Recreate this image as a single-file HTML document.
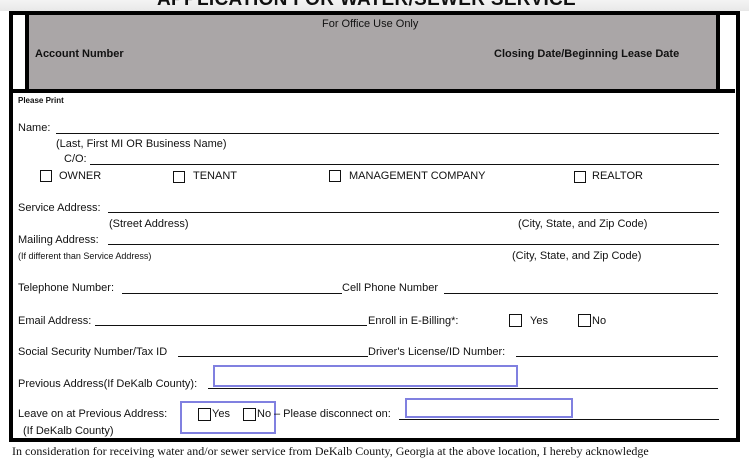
<!DOCTYPE html>
<html><head><meta charset="utf-8"><style>
body{margin:0;width:749px;height:449px;overflow:hidden;background:#fff;position:relative;font-family:"Liberation Sans",sans-serif;font-size:11px;color:#111}
.a{position:absolute;white-space:nowrap}
.l{position:absolute;height:1px;background:#111}
.cb{position:absolute;width:12px;height:12px;border:1px solid #111;box-sizing:border-box}
.bl{position:absolute;border:2px solid #8080e0;box-sizing:border-box}
</style></head><body>
<div class="a" style="left:0;top:0;width:749px;height:11px;background:linear-gradient(#f4f4f4,#e8e8e8)"></div>
<div class="a" style="left:157px;top:-11px;font-size:19px;font-weight:bold;letter-spacing:0.3px">APPLICATION FOR WATER/SEWER SERVICE</div>
<div class="a" style="left:9px;top:11px;width:731px;height:431px;border:4px solid #000;box-sizing:border-box"></div>
<div class="a" style="left:25px;top:15px;width:695px;height:74px;background:#aaa6a7;border-left:4px solid #000;border-right:4px solid #000;box-sizing:border-box"></div>
<div class="a" style="left:13px;top:89px;width:722px;height:4px;background:#000"></div>
<div class="a" style="left:322px;top:18px">For Office Use Only</div>
<div class="a" style="left:35px;top:48px;font-weight:bold">Account Number</div>
<div class="a" style="left:494px;top:48px;font-weight:bold">Closing Date/Beginning Lease Date</div>
<div class="a" style="left:18px;top:96px;font-size:8px;font-weight:bold">Please Print</div>

<div class="a" style="left:18px;top:122px">Name:</div><div class="l" style="left:56px;top:133px;width:663px"></div>
<div class="a" style="left:56px;top:138px">(Last, First MI OR Business Name)</div>
<div class="a" style="left:64px;top:153px">C/O:</div><div class="l" style="left:90px;top:164px;width:629px"></div>
<div class="cb" style="left:40px;top:170px"></div><div class="a" style="left:59px;top:170px">OWNER</div>
<div class="cb" style="left:173px;top:171px"></div><div class="a" style="left:193px;top:170px">TENANT</div>
<div class="cb" style="left:329px;top:170px"></div><div class="a" style="left:349px;top:170px">MANAGEMENT COMPANY</div>
<div class="cb" style="left:574px;top:171px"></div><div class="a" style="left:592px;top:170px">REALTOR</div>

<div class="a" style="left:18px;top:202px">Service Address:</div><div class="l" style="left:108px;top:212px;width:611px"></div>
<div class="a" style="left:109px;top:218px">(Street Address)</div>
<div class="a" style="left:518px;top:218px">(City, State, and Zip Code)</div>
<div class="a" style="left:18px;top:234px">Mailing Address:</div><div class="l" style="left:108px;top:244px;width:611px"></div>
<div class="a" style="left:18px;top:251px;font-size:9px">(If different than Service Address)</div>
<div class="a" style="left:512px;top:250px">(City, State, and Zip Code)</div>

<div class="a" style="left:18px;top:282px">Telephone Number:</div><div class="l" style="left:122px;top:293px;width:220px"></div>
<div class="a" style="left:342px;top:282px">Cell Phone Number</div><div class="l" style="left:444px;top:293px;width:274px"></div>
<div class="a" style="left:18px;top:315px">Email Address:</div><div class="l" style="left:95px;top:325px;width:272px"></div>
<div class="a" style="left:368px;top:315px">Enroll in E-Billing*:</div>
<div class="cb" style="left:509px;top:314px;width:13px;height:13px"></div><div class="a" style="left:530px;top:315px">Yes</div>
<div class="cb" style="left:578px;top:314px;width:13px;height:13px"></div><div class="a" style="left:592px;top:315px">No</div>
<div class="a" style="left:18px;top:346px">Social Security Number/Tax ID</div><div class="l" style="left:178px;top:356px;width:190px"></div>
<div class="a" style="left:368px;top:346px">Driver's License/ID Number:</div><div class="l" style="left:516px;top:356px;width:202px"></div>

<div class="a" style="left:18px;top:378px">Previous Address(If DeKalb County):</div><div class="l" style="left:208px;top:388px;width:510px"></div>
<div class="bl" style="left:213px;top:365px;width:305px;height:22px"></div>
<div class="a" style="left:18px;top:408px">Leave on at Previous Address:</div>
<div class="a" style="left:23px;top:425px">(If DeKalb County)</div>
<div class="bl" style="left:180px;top:401px;width:96px;height:33px"></div>
<div class="cb" style="left:198px;top:408px;width:13px;height:13px"></div><div class="a" style="left:212px;top:408px">Yes</div>
<div class="cb" style="left:243px;top:408px;width:13px;height:13px"></div><div class="a" style="left:257px;top:408px">No</div>
<div class="a" style="left:274px;top:408px">– Please disconnect on:</div><div class="l" style="left:399px;top:419px;width:320px"></div>
<div class="bl" style="left:405px;top:398px;width:168px;height:20px"></div>
<div class="a" style="left:12px;top:444px;font-family:'Liberation Serif',serif;font-size:12px">In consideration for receiving water and/or sewer service from DeKalb County, Georgia at the above location, I hereby acknowledge</div>
</body></html>
